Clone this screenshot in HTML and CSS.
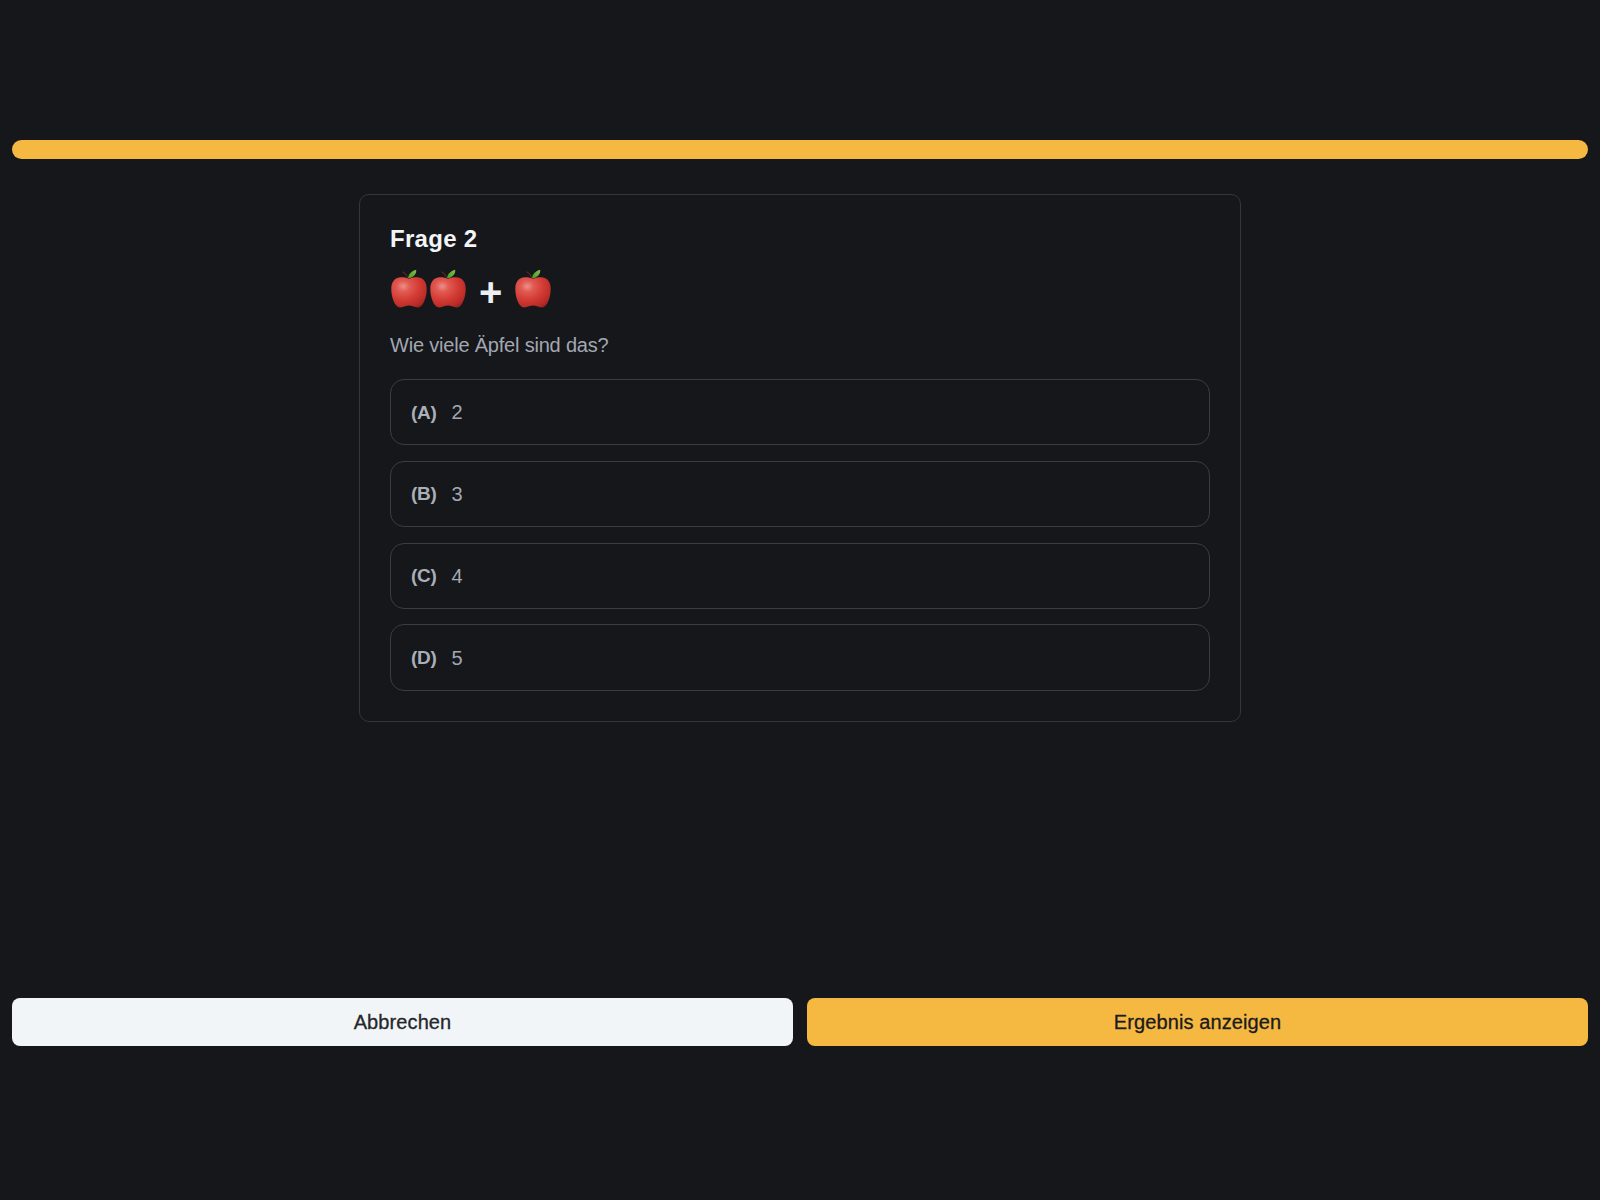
FILE: index.html
```html
<!DOCTYPE html>
<html lang="de">
<head>
<meta charset="utf-8">
<title>Frage 2</title>
<link rel="stylesheet" href="styles.css">
</head>
<body>
<svg class="defs" width="0" height="0" aria-hidden="true">
  <defs>
    <radialGradient id="appleBody" cx="0.34" cy="0.3" r="0.85">
      <stop offset="0" stop-color="#ee8f86"/>
      <stop offset="0.22" stop-color="#e05a52"/>
      <stop offset="0.55" stop-color="#d23a33"/>
      <stop offset="0.85" stop-color="#b52a26"/>
      <stop offset="1" stop-color="#8a2220"/>
    </radialGradient>
    <linearGradient id="appleLeaf" x1="0" y1="1" x2="1" y2="0">
      <stop offset="0" stop-color="#4a9a2c"/>
      <stop offset="1" stop-color="#7fc044"/>
    </linearGradient>
    <symbol id="apple" viewBox="0 0 36 40">
      <path d="M11.500 2.800c2.600 1.200 4.400 3.200 5.200 6.500" fill="none" stroke="#5a2c1c" stroke-width="1.200"/>
      <path d="M17 9.300c.4-4.200 3.400-7.300 8.200-8.600.5 4.500-3 8-8.200 8.600z" fill="url(#appleLeaf)"/>
      <path d="M18 9.800c3-1.500 6.600-2 10-1.300 4.900 1 7.700 5 7.700 11.200 0 6.800-2 13-4.800 16.600-1.800 2.200-4.300 2.600-6.600 1.800-2-.7-4.300-1.600-6.300-1.600s-4.300.9-6.300 1.600c-2.300.8-4.800.4-6.600-1.800C2.300 32.700.3 26.500.3 19.700.3 13.500 3.100 9.500 8 8.500c3.400-.7 7-.2 10 1.300z" fill="url(#appleBody)"/>
    </symbol>
  </defs>
</svg>
<main class="page">
  <div class="progress"></div>
  <section class="card">
    <h2 class="title">Frage 2</h2>
    <div class="sum">
      <svg class="apple" viewBox="0 0 36 40"><use href="#apple"/></svg><svg class="apple" viewBox="0 0 36 40"><use href="#apple"/></svg>
      <span class="plus">+</span>
      <svg class="apple" viewBox="0 0 36 40"><use href="#apple"/></svg>
    </div>
    <p class="question">Wie viele Äpfel sind das?</p>
    <ul class="options">
      <li class="option"><b class="letter">(A)</b><span>2</span></li>
      <li class="option"><b class="letter">(B)</b><span>3</span></li>
      <li class="option"><b class="letter">(C)</b><span>4</span></li>
      <li class="option"><b class="letter">(D)</b><span>5</span></li>
    </ul>
  </section>
  <div class="actions">
    <button class="btn btn-light">Abbrechen</button>
    <button class="btn btn-primary">Ergebnis anzeigen</button>
  </div>
</main>
</body>
</html>
```
FILE: styles.css
```css
* { box-sizing: border-box; }
html, body { margin: 0; height: 100%; }
body {
  background: #15171b;
  color: #f2f4f7;
  font-family: "Liberation Sans", Arial, sans-serif;
}
.defs { display: block; height: 0; }
.page {
  display: flex;
  flex-direction: column;
  align-items: center;
  padding: 140px 12px 0;
}
.progress {
  width: 100%;
  height: 19px;
  border-radius: 10px;
  background: #f5b942;
}
.card {
  width: 882px;
  height: 528px;
  margin-top: 35px;
  padding: 30px;
  border: 1px solid #34363f;
  border-radius: 10px;
  background: #15171b;
}
.title {
  margin: 0;
  height: 28px;
  font-size: 24px;
  line-height: 28px;
  font-weight: 700;
  letter-spacing: 0.300px;
  color: #f2f4f7;
}
.sum {
  display: flex;
  align-items: flex-start;
  height: 46px;
  margin-top: 16px;
  padding-left: 1px;
}
.apple {
  width: 36px;
  height: 40px;
  margin: 0 3px 0 0;
}
.plus {
  margin: 0 13px 0 10px;
  font-size: 40px;
  line-height: 46px;
  font-weight: 700;
  color: #eceef2;
}
.question {
  margin: 17px 0 0;
  font-size: 20px;
  line-height: 26px;
  letter-spacing: -0.200px;
  color: #a3a7b2;
}
.options {
  display: flex;
  flex-direction: column;
  gap: 15.500px;
  margin: 21px 0 0;
  padding: 0;
  list-style: none;
}
.option {
  display: flex;
  align-items: center;
  gap: 15px;
  height: 66.300px;
  padding: 1px 20px 0;
  border: 1px solid #3a3c45;
  border-radius: 14px;
  font-size: 20px;
  color: #a3a7b2;
}
.letter {
  font-size: 19px;
  font-weight: 700;
  letter-spacing: -0.300px;
  color: #abafb8;
}
.actions {
  display: flex;
  gap: 14px;
  width: 100%;
  margin-top: 276px;
}
.btn {
  flex: 1;
  height: 48px;
  border: 0;
  border-radius: 8px;
  font-family: inherit;
  font-size: 20px;
  letter-spacing: 0.100px;
  -webkit-text-stroke: 0.300px currentColor;
  color: #25272c;
}
.btn-light { background: #f2f5f7; }
.btn-primary { background: #f5b942; color: #1a1b1e; }
```
